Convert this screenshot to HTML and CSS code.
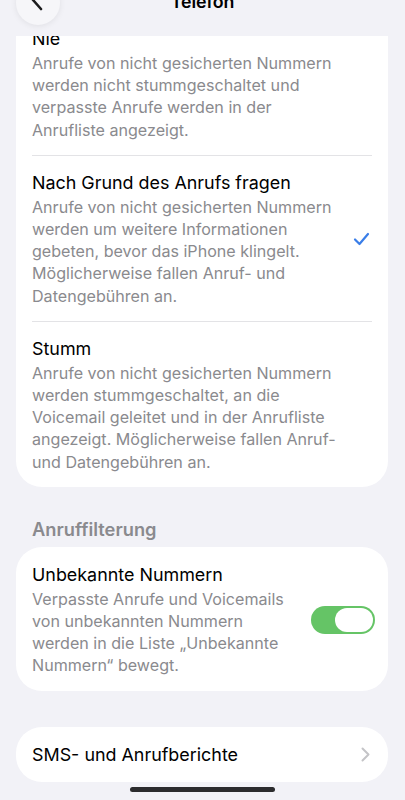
FILE: index.html
```html
<!DOCTYPE html>
<html lang="de">
<head>
<meta charset="utf-8">
<title>Telefon</title>
<link rel="stylesheet" href="styles.css">
</head>
<body>
<div class="screen">
  <header class="nav">
    <button class="back" aria-label="Zurück">
      <svg width="14" height="22" viewBox="0 0 14 22"><path d="M11 2 L3 11 L11 20" fill="none" stroke="#1c1c1e" stroke-width="2.6" stroke-linecap="round" stroke-linejoin="round"/></svg>
    </button>
    <h1 class="title">Telefon</h1>
    <span class="nav-spacer"></span>
  </header>
  <main class="content">
    <section class="card card-first">
      <div class="row">
        <div class="text">
          <div class="label">Nie</div>
          <p class="desc">Anrufe von nicht gesicherten Nummern<br>werden nicht stummgeschaltet und<br>verpasste Anrufe werden in der<br>Anrufliste angezeigt.</p>
        </div>
      </div>
      <div class="row">
        <div class="text">
          <div class="label">Nach Grund des Anrufs fragen</div>
          <p class="desc">Anrufe von nicht gesicherten Nummern<br>werden um weitere Informationen<br>gebeten, bevor das iPhone klingelt.<br>Möglicherweise fallen Anruf- und<br>Datengebühren an.</p>
        </div>
        <svg class="check" width="17" height="14" viewBox="0 0 17 14"><path d="M2 7.5 L6.5 12 L15 2" fill="none" stroke="#3a7ee8" stroke-width="2.2" stroke-linecap="round" stroke-linejoin="round"/></svg>
      </div>
      <div class="row">
        <div class="text">
          <div class="label">Stumm</div>
          <p class="desc">Anrufe von nicht gesicherten Nummern<br>werden stummgeschaltet, an die<br>Voicemail geleitet und in der Anrufliste<br>angezeigt. Möglicherweise fallen Anruf-<br>und Datengebühren an.</p>
        </div>
      </div>
    </section>

    <h2 class="section-title">Anruffilterung</h2>
    <section class="card">
      <div class="row">
        <div class="text">
          <div class="label">Unbekannte Nummern</div>
          <p class="desc">Verpasste Anrufe und Voicemails<br>von unbekannten Nummern<br>werden in die Liste „Unbekannte<br>Nummern“ bewegt.</p>
        </div>
        <span class="toggle on"><span class="knob"></span></span>
      </div>
    </section>

    <section class="card card-link">
      <div class="row row-link">
        <span class="label">SMS- und Anrufberichte</span>
        <svg class="chevron" width="9" height="15" viewBox="0 0 9 15"><path d="M1.5 1.5 L7.5 7.5 L1.5 13.5" fill="none" stroke="#c4c4c7" stroke-width="2" stroke-linecap="round" stroke-linejoin="round"/></svg>
      </div>
    </section>
  </main>
  <div class="home-indicator"></div>
</div>
</body>
</html>
```
FILE: styles.css
```css
* { box-sizing: border-box; }
html, body {
  margin: 0;
  padding: 0;
  background: #f2f2f7;
}
body {
  font-family: Inter, "Noto Sans", "Liberation Sans", sans-serif;
  color: #000;
  -webkit-font-smoothing: antialiased;
}
.screen {
  position: relative;
  width: 405px;
  height: 800px;
  overflow: hidden;
  display: flex;
  flex-direction: column;
  background: #f2f2f7;
}
.nav {
  height: 36px;
  flex: none;
  display: grid;
  grid-template-columns: 44px 1fr 44px;
  align-items: start;
  padding: 0 16px;
  background: #f2f2f7;
}
.back {
  width: 44px;
  height: 44px;
  margin-top: -19px;
  border: none;
  border-radius: 50%;
  background: #f6f6f9;
  box-shadow: 0 1px 6px rgba(0,0,0,0.08);
  display: flex;
  align-items: flex-end;
  justify-content: center;
  padding: 0 2px 14px 0;
}
.back svg { display: block; }
.title {
  margin: -9px 0 0;
  text-align: center;
  font-size: 17.8px;
  line-height: 22px;
  font-weight: 600;
  letter-spacing: -0.1px;
}
.content {
  flex: 1;
  overflow: hidden;
  padding: 0 17px 0 16px;
  display: flex;
  flex-direction: column;
}
.card {
  background: #fff;
  border-radius: 26px;
  flex: none;
}
.card-first { margin-top: -25px; }
.row {
  display: flex;
  align-items: center;
  padding: 16px 18px 14px 16px;
  position: relative;
}
.row + .row::before {
  content: "";
  position: absolute;
  top: 0;
  left: 16px;
  right: 16px;
  height: 1px;
  background: #e3e3e6;
}
.text { flex: 1; min-width: 0; }
.label {
  font-size: 17.9px;
  line-height: 23px;
  white-space: nowrap;
}
.desc {
  margin: 2px 0 0;
  font-size: 16.1px;
  line-height: 22.2px;
  color: #8a8a8e;
  white-space: nowrap;
}
.check { flex: none; display: block; }
.section-title {
  margin: 31px 0 7px;
  padding-left: 16px;
  font-size: 18.3px;
  line-height: 22px;
  font-weight: 600;
  color: #8a8a8e;
}
.toggle {
  flex: none;
  width: 64px;
  height: 28px;
  border-radius: 14px;
  background: #65c466;
  display: flex;
  align-items: center;
  justify-content: flex-end;
  padding: 0 2px;
  margin-right: -5px;
}
.knob {
  width: 38px;
  height: 24px;
  border-radius: 12px;
  background: #fff;
}
.card-link { margin-top: 36px; }
.row-link {
  padding: 16px 18px 16px 16px;
  justify-content: space-between;
  height: 55px;
}
.chevron { display: block; }
.home-indicator {
  position: absolute;
  left: 130px;
  bottom: 8px;
  width: 145px;
  height: 5px;
  border-radius: 3px;
  background: #2c2c2e;
}
```
